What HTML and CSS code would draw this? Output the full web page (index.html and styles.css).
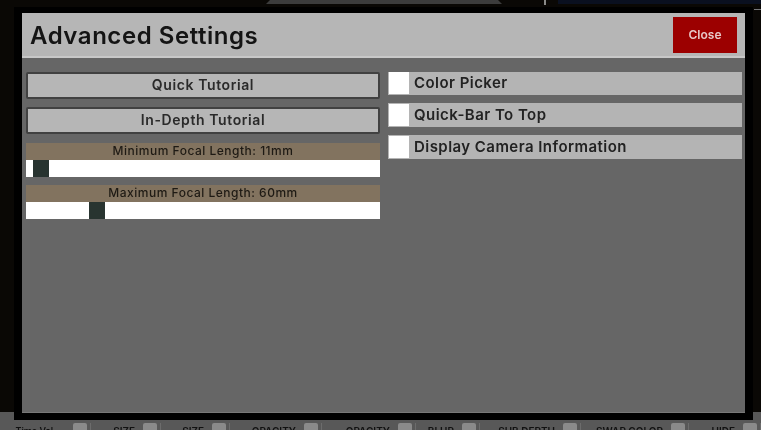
FILE: index.html
```html
<!DOCTYPE html>
<html lang="en">
<head>
<meta charset="utf-8">
<title>Advanced Settings</title>
<link rel="stylesheet" href="styles.css">
</head>
<body>
<div class="stage">
  <div class="topstrip">
    <div class="tab"></div>
    <div class="tick"></div>
    <div class="navy"></div>
  </div>
  <div class="edge-mark"></div>
  <div class="bottombar">
    <div class="tool tool-1"><span>Time Val</span><i></i></div>
    <div class="tool tool-2"><span>SIZE</span><i></i></div>
    <div class="tool tool-3"><span>SIZE</span><i></i></div>
    <div class="tool tool-4"><span>OPACITY</span><i></i></div>
    <div class="tool tool-5"><span>OPACITY</span><i></i></div>
    <div class="tool tool-6"><span>BLUR</span><i></i></div>
    <div class="tool tool-7"><span>SUB DEPTH</span><i></i></div>
    <div class="tool tool-8"><span>SWAP COLOR</span><i></i></div>
    <div class="tool tool-9"><span>HIDE</span><i></i></div>
  </div>
  <section class="modal">
    <header class="modal-head">
      <h1>Advanced Settings</h1>
      <button class="close">Close</button>
    </header>
    <div class="modal-body">
      <div class="col">
        <button class="wide">Quick Tutorial</button>
        <button class="wide">In-Depth Tutorial</button>
        <div class="slider">
          <div class="slider-label">Minimum Focal Length: 11mm</div>
          <div class="track"><div class="thumb thumb-min"></div></div>
        </div>
        <div class="slider">
          <div class="slider-label">Maximum Focal Length: 60mm</div>
          <div class="track"><div class="thumb thumb-max"></div></div>
        </div>
      </div>
      <div class="col col-right">
        <label class="check"><span class="box"></span>Color Picker</label>
        <label class="check"><span class="box"></span>Quick-Bar To Top</label>
        <label class="check"><span class="box"></span>Display Camera Information</label>
      </div>
    </div>
  </section>
</div>
</body>
</html>
```
FILE: styles.css
```css
* { box-sizing: border-box; }
html, body { margin: 0; padding: 0; background: #0a0805; }
body { width: 761px; height: 430px; overflow: hidden; font-family: Inter, "Liberation Sans", sans-serif; }
.stage { position: relative; width: 761px; height: 430px; overflow: hidden; display: flex; flex-direction: column; justify-content: space-between; filter: blur(0.7px); }

.topstrip { display: flex; height: 5px; }
.tab { width: 236px; height: 4px; margin-left: 266px; background: #3c3c3c; clip-path: polygon(4px 0, 232px 0, 100% 100%, 0 100%); }
.tick { width: 2px; height: 5px; margin-left: 42px; background: #8a8a88; }
.navy { flex: 1; margin-left: 12px; height: 4px; background: #0a1020; }
.edge-mark { position: absolute; right: 0; top: 9px; width: 7px; height: 1px; background: #77777a; }

.bottombar { display: flex; height: 18px; background: #585858; padding-top: 11px; overflow: hidden; }
.tool { display: flex; justify-content: flex-end; gap: 8px; height: 12px; font-size: 10px; font-weight: 600; line-height: 12px; color: #111; border-right: 1px solid #6c6c6c; padding-right: 3px; padding-top: 2px; }
.tool i { width: 14px; height: 10px; margin-top: -2px; border-radius: 2px; background: #8a8a8a; }
.tool-1 { width: 91px; gap: 20px; font-size: 9px; }
.tool-2 { width: 70px; }
.tool-3 { width: 69px; }
.tool-4 { width: 92px; }
.tool-5 { width: 94px; }
.tool-6 { width: 64px; }
.tool-7 { width: 101px; }
.tool-8 { width: 108px; }
.tool-9 { flex: 1; }

.modal { position: absolute; left: 14px; top: 7px; width: 739px; height: 413px; padding: 6px 8px 7px; background: #000; display: flex; flex-direction: column; }
.modal-head { display: flex; align-items: center; justify-content: space-between; height: 45px; padding: 0 8px; background: #b6b6b6; border-bottom: 2px solid #c8c8c8; box-shadow: 0 2px 0 #3a3a3a; }
.modal-head h1 { margin: 2px 0 0; font-size: 24px; font-weight: 600; color: #141414; letter-spacing: 0.55px; }
.close { width: 64px; height: 36px; border: 0; background: #9c0000; color: #e8c8c8; font: 600 12px Inter, "Liberation Sans", sans-serif; }

.modal-body { flex: 1; display: grid; grid-template-columns: 354px 354px; column-gap: 8px; padding: 14px 4px 0; background: #666; border-bottom: 1px solid #787878; }
.col { display: flex; flex-direction: column; }
.col-right { gap: 8px; }

.wide { height: 27px; margin-bottom: 8px; padding: 0 0 2px; border: 2px solid #414141; border-radius: 2px; background: #b6b6b6; color: #2a2a2a; font: 600 14px Inter, "Liberation Sans", sans-serif; letter-spacing: 0.6px; }
.wide + .slider { margin-top: 1px; }
.slider { margin-bottom: 8px; }
.slider-label { height: 17px; padding-bottom: 1px; background: #82735f; color: #1e1a14; font-size: 12px; font-weight: 500; line-height: 16px; letter-spacing: 0.5px; text-align: center; }
.track { height: 17px; background: #fff; }
.thumb { width: 16px; height: 17px; background: #283430; }
.thumb-min { margin-left: 7px; }
.thumb-max { margin-left: 63px; }

.check { display: flex; align-items: center; height: 24px; padding-bottom: 2px; background: #b4b4b4; color: #222; font-size: 15px; font-weight: 600; letter-spacing: 0.45px; }
.box { width: 20px; height: 22px; margin: 2px 5px 0 1px; background: #fff; }
.check:first-child { height: 23px; padding-bottom: 3px; }
```
